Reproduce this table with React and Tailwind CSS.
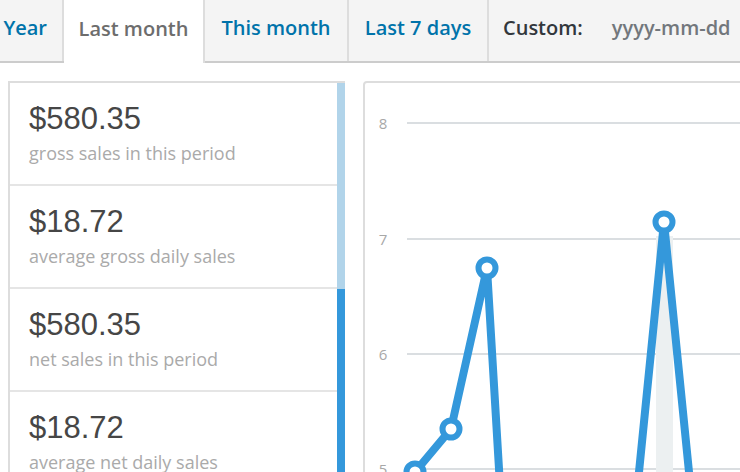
const tabs = [
  { label: 'Year', width: 'w-[64px]', align: 'justify-end pr-[15px]' },
  { label: 'Last month', width: 'w-[141px]', active: true },
  { label: 'This month', width: 'w-[144px]' },
  { label: 'Last 7 days', width: 'w-[140px]' },
];

const stats = [
  { amount: '$580.35', label: 'gross sales in this period', strip: 'border-r-[#b1d4ea]' },
  { amount: '$18.72', label: 'average gross daily sales', strip: 'border-r-[#b1d4ea]' },
  { amount: '$580.35', label: 'net sales in this period', strip: 'border-r-[#3498db]' },
  { amount: '$18.72', label: 'average net daily sales', strip: 'border-r-[#3498db]' },
];

function RangeTabs() {
  return (
    <div className="flex h-[63px] border-b-2 border-[#cccccc] bg-[#f4f4f4] font-['Open_Sans',sans-serif] text-[20px] font-semibold">
      {tabs.map((t) => (
        <div
          key={t.label}
          className={`flex shrink-0 items-center pb-[6px] border-r-2 border-[#dddddd] whitespace-nowrap ${t.width} ${t.align || 'justify-center'} ${
            t.active ? 'bg-white text-[#6d6d6d] h-[63px] -mb-[2px]' : 'text-[#0073aa]'
          }`}
        >
          {t.label}
        </div>
      ))}
      <div className="flex items-center pb-[6px] pl-[14px] whitespace-nowrap">
        <span className="text-[#32373c]">Custom:</span>
        <span className="ml-[29px] text-[#72777c]">yyyy-mm-dd</span>
      </div>
    </div>
  );
}

function StatsLegend() {
  return (
    <ul className="w-[337px] shrink-0 border-l-2 border-t-2 border-[#dddddd]">
      {stats.map((s, i) => (
        <li key={i} className={`h-[103px] border-r-8 ${s.strip}`}>
          <div className="h-full border-b-2 border-[#e5e5e5] pl-[19px] pt-[18px]">
            <div className="font-['Liberation_Sans',Arial,sans-serif] text-[31px] leading-[36px] text-[#464646]">
              {s.amount}
            </div>
            <div className="mt-[4px] font-['Open_Sans',sans-serif] text-[18px] leading-[24px] text-[#aaaaaa]">
              {s.label}
            </div>
          </div>
        </li>
      ))}
    </ul>
  );
}

function SalesChart() {
  const grid = [
    { y: 40, label: '8' },
    { y: 156, label: '7' },
    { y: 271, label: '6' },
    { y: 386, label: '5' },
  ];
  return (
    <div className="w-[420px] shrink-0 h-[420px] rounded-[4px] border-2 border-[#dddddd] bg-white">
      <svg width="416" height="416" className="block">
        {grid.map((g) => (
          <g key={g.label}>
            <line x1="42" x2="416" y1={g.y} y2={g.y} stroke="#dadee1" strokeWidth="2" />
            <text
              x="18"
              y={g.y + 6}
              fill="#a8a8a8"
              fontSize="15"
              fontFamily="Open Sans, sans-serif"
              textAnchor="middle"
            >
              {g.label}
            </text>
          </g>
        ))}
        <rect x="291" y="153" width="17" height="300" fill="#ecf0f1" />
        <polyline
          points="20,650 50,389 86,346 122,185 148,620"
          fill="none"
          stroke="#3498db"
          strokeWidth="8"
          strokeLinejoin="round"
        />
        <polyline
          points="250,629 299,139 348,629"
          fill="none"
          stroke="#3498db"
          strokeWidth="8"
          strokeLinejoin="round"
        />
        {[
          [50, 389],
          [86, 346],
          [122, 185],
          [299, 139],
        ].map(([cx, cy]) => (
          <circle key={cx} cx={cx} cy={cy} r="8.5" fill="#ffffff" stroke="#3498db" strokeWidth="6" />
        ))}
      </svg>
    </div>
  );
}

export default function App() {
  return (
    <div className="w-[740px] h-[472px] overflow-hidden bg-white">
      <div className="w-[900px]">
        <RangeTabs />
        <div className="flex gap-[18px] pl-[8px] pt-[18px]">
          <StatsLegend />
          <SalesChart />
        </div>
      </div>
    </div>
  );
}
